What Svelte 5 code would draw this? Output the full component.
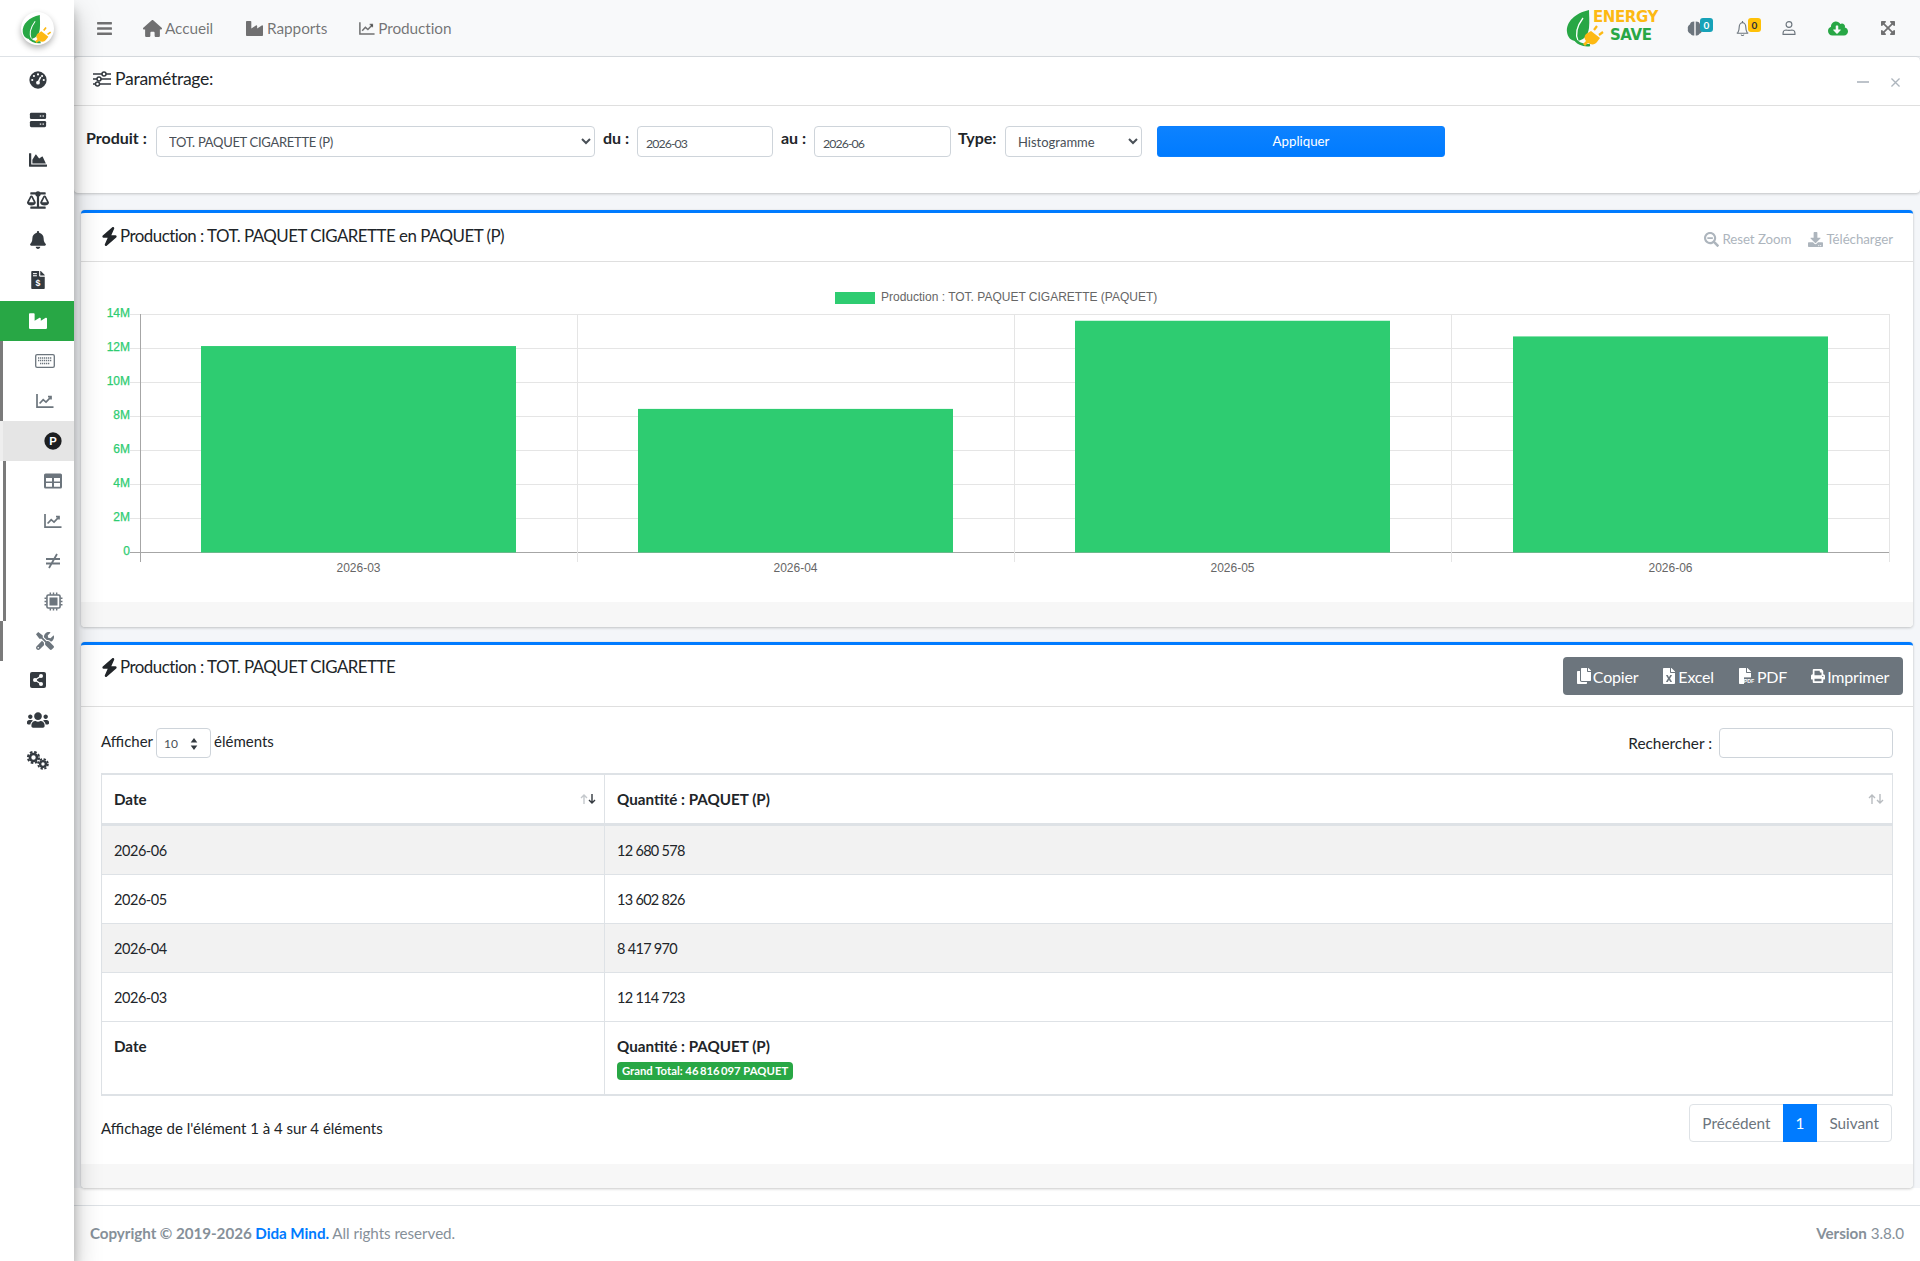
<script>
  const P = {
    bars: [448, 'M16 132h416c8.837 0 16-7.163 16-16V76c0-8.837-7.163-16-16-16H16C7.163 60 0 67.163 0 76v40c0 8.837 7.163 16 16 16zm0 160h416c8.837 0 16-7.163 16-16v-40c0-8.837-7.163-16-16-16H16c-8.837 0-16 7.163-16 16v40c0 8.837 7.163 16 16 16zm0 160h416c8.837 0 16-7.163 16-16v-40c0-8.837-7.163-16-16-16H16c-8.837 0-16 7.163-16 16v40c0 8.837 7.163 16 16 16z'],
    home: [576, 'M575.8 255.5c0 18-15 32.1-32 32.1h-32l.7 160.2c0 2.7-.2 5.4-.5 8.1V472c0 22.1-17.9 40-40 40H456c-1.1 0-2.2 0-3.3-.1c-1.4 .1-2.8 .1-4.2 .1H416 392c-22.1 0-40-17.9-40-40V448 384c0-17.7-14.3-32-32-32H256c-17.7 0-32 14.3-32 32v64 24c0 22.1-17.9 40-40 40H160 128.1c-1.5 0-3-.1-4.5-.2c-1.2 .1-2.4 .2-3.6 .2H104c-22.1 0-40-17.9-40-40V360c0-.9 0-1.9 .1-2.8V287.6H32c-18 0-32-14-32-32.1c0-9 3-17 10-24L266.4 8c7-7 15-8 22-8s15 2 21 7L564.8 231.5c8 7 12 15 11 24z'],
    industry: [512, 'M475.115 163.781L336 252.309v-68.28c0-18.916-20.931-30.399-36.885-20.248L160 252.309V56c0-13.255-10.745-24-24-24H24C10.745 32 0 42.745 0 56v400c0 13.255 10.745 24 24 24h464c13.255 0 24-10.745 24-24V184.029c0-18.917-20.931-30.399-36.885-20.248z'],
    bolt: [448, 'M349.4 44.6c5.9-13.7 1.5-29.7-10.6-38.5s-28.6-8-39.9 1.8l-256 224c-10 8.8-13.6 22.9-8.9 35.3S50.7 288 64 288H175.5L98.6 467.4c-5.9 13.7-1.5 29.7 10.6 38.5s28.6 8 39.9-1.8l256-224c10-8.8 13.5-22.9 8.9-35.3s-16.6-20.7-30-20.7H272.5L349.4 44.6z'],
    area: [512, 'M500 384c6.6 0 12 5.4 12 12v40c0 6.6-5.4 12-12 12H12c-6.6 0-12-5.4-12-12V76c0-6.6 5.4-12 12-12h40c6.6 0 12 5.4 12 12v308h436zM372.7 159.5L288 216l-85.3-113.7c-5.1-6.8-15.5-6.3-19.9 1L96 248v104h384l-89.9-187.8c-3.2-6.5-11.4-8.7-17.4-4.7z'],
    scale: [640, 'M256 336h-.02c0-16.18 1.34-8.73-85.05-181.51-17.65-35.29-68.19-35.36-85.87 0C-2.06 328.75.02 320.33.02 336H0c0 44.18 57.31 80 128 80s128-35.82 128-80zM128 176l72 144H56l72-144zm511.98 160c0-16.18 1.34-8.73-85.05-181.51-17.65-35.29-68.19-35.36-85.87 0-87.12 174.26-85.04 165.84-85.04 181.51H384c0 44.18 57.31 80 128 80s128-35.82 128-80h-.02zM440 320l72-144 72 144H440zm88 128H352V153.25c23.51-10.29 41.16-31.48 46.39-57.25H528c8.84 0 16-7.16 16-16V48c0-8.84-7.16-16-16-16H383.64C369.04 12.68 346.09 0 320 0s-49.04 12.68-63.64 32H112c-8.84 0-16 7.16-16 16v32c0 8.84 7.16 16 16 16h129.61c5.23 25.76 22.87 46.96 46.39 57.25V448H112c-8.84 0-16 7.16-16 16v32c0 8.84 7.16 16 16 16h416c8.84 0 16-7.16 16-16v-32c0-8.84-7.16-16-16-16z'],
    bell: [448, 'M224 512c35.32 0 63.97-28.65 63.97-64H160.03c0 35.35 28.65 64 63.97 64zm215.39-149.71c-19.32-20.76-55.47-51.99-55.47-154.29 0-77.7-54.48-139.9-127.94-155.16V32c0-17.67-14.32-32-31.98-32s-31.98 14.33-31.98 32v20.84C118.56 68.1 64.08 130.3 64.08 208c0 102.3-36.15 133.53-55.47 154.29-6 6.45-8.66 14.16-8.61 21.71.11 16.4 12.98 32 32.1 32h383.8c19.12 0 32-15.6 32.1-32 .05-7.55-2.61-15.27-8.61-21.71z'],
    tools: [512, 'M501.1 395.7L384 278.6c-23.1-23.1-57.6-27.6-85.4-13.9L192 158.1V96L64 0 0 64l96 128h62.1l106.6 106.6c-13.6 27.8-9.2 62.3 13.9 85.4l117.1 117.1c14.6 14.6 38.2 14.6 52.7 0l52.7-52.7c14.5-14.6 14.5-38.2 0-52.7zM331.7 225c28.3 0 54.9 11 74.9 31l19.4 19.4c15.8-6.9 30.8-16.5 43.8-29.5 37.1-37.1 49.7-89.3 37.9-136.7-2.2-9-13.5-12.1-20.1-5.5l-74.4 74.4-67.9-11.3L334 98.9l74.4-74.4c6.6-6.6 3.4-17.9-5.7-20.2-47.4-11.7-99.6.9-136.6 37.9-28.5 28.5-41.9 66.1-41.2 103.6l82.1 82.1c8.1-1.9 16.5-2.9 24.7-2.9zm-103.9 82l-56.7-56.7L18.7 402.8c-25 25-25 65.5 0 90.5s65.5 25 90.5 0l123.6-123.6c-7.6-19.9-9.9-41.6-5-62.7zM64 472c-13.2 0-24-10.8-24-24 0-13.3 10.7-24 24-24s24 10.7 24 24c0 13.2-10.7 24-24 24z'],
    users: [640, 'M96 224c35.3 0 64-28.7 64-64s-28.7-64-64-64-64 28.7-64 64 28.7 64 64 64zm448 0c35.3 0 64-28.7 64-64s-28.7-64-64-64-64 28.7-64 64 28.7 64 64 64zm32 32h-64c-17.6 0-33.5 7.1-45.1 18.6 40.3 22.1 68.9 62 75.1 109.4h66c17.7 0 32-14.3 32-32v-32c0-35.3-28.7-64-64-64zm-256 0c61.9 0 112-50.1 112-112S381.9 32 320 32 208 82.1 208 144s50.1 112 112 112zm76.8 32h-8.3c-20.8 10-43.9 16-68.5 16s-47.6-6-68.5-16h-8.3C179.6 288 128 339.6 128 403.2V432c0 26.5 21.5 48 48 48h288c26.5 0 48-21.5 48-48v-28.8c0-63.6-51.6-115.2-115.2-115.2zm-223.7-13.4C161.5 263.1 145.6 256 128 256H64c-35.3 0-64 28.7-64 64v32c0 17.7 14.3 32 32 32h65.9c6.3-47.4 34.9-87.3 75.2-109.4z'],
    copy: [448, 'M320 448v40c0 13.255-10.745 24-24 24H24c-13.255 0-24-10.745-24-24V120c0-13.255 10.745-24 24-24h72v296c0 30.879 25.121 56 56 56h168zm0-344V0H152c-13.255 0-24 10.745-24 24v368c0 13.255 10.745 24 24 24h272c13.255 0 24-10.745 24-24V128H344c-13.2 0-24-10.8-24-24zm120.971-31.029L375.029 7.029A24 24 0 0 0 358.059 0H352v96h96v-6.059a24 24 0 0 0-7.029-16.97z'],
    excel: [384, 'M224 136V0H24C10.7 0 0 10.7 0 24v464c0 13.3 10.7 24 24 24h336c13.3 0 24-10.7 24-24V160H248c-13.2 0-24-10.8-24-24zm60.1 106.5L224 336l60.1 93.5c5.1 8-.6 18.5-10.1 18.5h-34.9c-4.4 0-8.5-2.4-10.6-6.3C208.9 405.5 192 373 192 373c-6.4 14.8-10 20-36.6 68.8-2.1 3.9-6.1 6.3-10.5 6.3H110c-9.5 0-15.2-10.5-10.1-18.5l60.3-93.5-60.3-93.5c-5.2-8 .6-18.5 10.1-18.5h34.8c4.4 0 8.5 2.4 10.6 6.3 26.1 48.8 20 33.6 36.6 68.5 0 0 6.1-11.7 36.6-68.5 2.1-3.9 6.2-6.3 10.6-6.3H274c9.5-.1 15.2 10.4 10.1 18.4zM384 121.9v6.1H256V0h6.1c6.4 0 12.5 2.5 17 7l97.9 98c4.5 4.5 7 10.6 7 16.9z'],
    file: [384, 'M377 105L279.1 7c-4.5-4.5-10.6-7-17-7H256v128h128v-6.1c0-6.3-2.5-12.4-7-16.9zm-153 31V0H24C10.7 0 0 10.7 0 24v464c0 13.3 10.7 24 24 24h336c13.3 0 24-10.7 24-24V160H248c-13.2 0-24-10.8-24-24z'],
    print: [512, 'M448 192V77.25c0-8.49-3.37-16.62-9.37-22.63L393.37 9.37c-6-6-14.14-9.37-22.63-9.37H96C78.33 0 64 14.33 64 32v160c-35.35 0-64 28.65-64 64v112c0 8.84 7.16 16 16 16h48v96c0 17.67 14.33 32 32 32h320c17.67 0 32-14.33 32-32v-96h48c8.84 0 16-7.16 16-16V256c0-35.35-28.65-64-64-64zm-64 256H128v-96h256v96zm0-224H128V64h192v48c0 8.84 7.16 16 16 16h48v96zm48 72c-13.25 0-24-10.75-24-24 0-13.26 10.75-24 24-24s24 10.74 24 24c0 13.25-10.75 24-24 24z'],
    zoomout: [512, 'M304 192v32c0 6.6-5.4 12-12 12H124c-6.6 0-12-5.4-12-12v-32c0-6.6 5.4-12 12-12h168c6.6 0 12 5.4 12 12zm201 284.7L476.7 505c-9.4 9.4-24.6 9.4-33.9 0L343 405.3c-4.5-4.5-7-10.6-7-17V372c-35.3 27.6-79.7 44-128 44C93.1 416 0 322.9 0 208S93.1 0 208 0s208 93.1 208 208c0 48.3-16.4 92.7-44 128h16.3c6.4 0 12.5 2.5 17 7l99.7 99.7c9.3 9.4 9.3 24.6 0 34zM344 208c0-75.2-60.8-136-136-136S72 132.8 72 208s60.8 136 136 136 136-60.8 136-136z'],
    download: [512, 'M216 0h80c13.3 0 24 10.7 24 24v168h87.7c17.8 0 26.7 21.5 14.1 34.1L269.7 378.3c-7.5 7.5-19.8 7.5-27.3 0L90.1 226.1c-12.6-12.6-3.7-34.1 14.1-34.1H192V24c0-13.3 10.7-24 24-24zm296 376v112c0 13.3-10.7 24-24 24H24c-13.3 0-24-10.7-24-24V376c0-13.3 10.7-24 24-24h146.7l49 49c20.1 20.1 52.5 20.1 72.6 0l49-49H488c13.3 0 24 10.7 24 24zm-124 88c0-11-9-20-20-20s-20 9-20 20 9 20 20 20 20-9 20-20zm64 0c0-11-9-20-20-20s-20 9-20 20 9 20 20 20 20-9 20-20z'],
    cloud: [640, 'M537.6 226.6c4.1-10.7 6.4-22.4 6.4-34.6 0-53-43-96-96-96-19.7 0-38.1 6-53.3 16.2C367 64.2 315.3 32 256 32c-88.4 0-160 71.6-160 160 0 2.7.1 5.4.2 8.1C40.2 219.8 0 273.2 0 336c0 79.5 64.5 144 144 144h368c70.7 0 128-57.3 128-128 0-61.9-44-113.6-102.4-125.4zm-132.9 88.7L299.3 420.7c-6.2 6.2-16.4 6.2-22.6 0L171.3 315.3c-10.1-10.1-2.9-27.3 11.3-27.3H248V176c0-8.8 7.2-16 16-16h48c8.8 0 16 7.2 16 16v112h65.4c14.2 0 21.4 17.2 11.3 27.3z'],
    expand: [448, 'M448 344v112a23.94 23.94 0 0 1-24 24H312c-21.39 0-32.09-25.9-17-41l36.2-36.2L224 295.6 116.77 402.9 153 439c15.09 15.1 4.39 41-17 41H24a23.94 23.94 0 0 1-24-24V344c0-21.4 25.89-32.1 41-17l36.19 36.2L184.46 256 77.18 148.7 41 185c-15.1 15.1-41 4.4-41-17V56a23.94 23.94 0 0 1 24-24h112c21.39 0 32.09 25.9 17 41l-36.2 36.2L224 216.4l107.23-107.3L295 73c-15.09-15.1-4.39-41 17-41h112a23.94 23.94 0 0 1 24 24v112c0 21.4-25.89 32.1-41 17l-36.19-36.2L263.54 256l107.28 107.3L407 327.1c15.1-15.2 41-4.5 41 16.9z']
  };

  const yTicks = [['14M',314],['12M',348],['10M',382],['8M',416],['6M',450],['4M',484],['2M',518],['0',552]];
  const xGrid = [140.5, 577.5, 1014.5, 1451.5, 1889.5];
  const bars = [
    { label: '2026-03', x: 201, value: 12114723 },
    { label: '2026-04', x: 638, value: 8417970 },
    { label: '2026-05', x: 1075, value: 13602826 },
    { label: '2026-06', x: 1513, value: 12680578 }
  ];
  const barY = (v) => 552 - (v / 14000000) * 238;
  const rows = [
    ['2026-06', '12\u00a0680\u00a0578'],
    ['2026-05', '13\u00a0602\u00a0826'],
    ['2026-04', '8\u00a0417\u00a0970'],
    ['2026-03', '12\u00a0114\u00a0723']
  ];
</script>

{#snippet ic(name, cls)}
  <svg class="ic {cls}" viewBox="0 0 {P[name][0]} 512" fill="currentColor" aria-hidden="true"><path d={P[name][1]} /></svg>
{/snippet}

{#snippet lineChart(cls)}
  <svg class="ic {cls}" viewBox="0 0 18 16" fill="none" stroke="currentColor" stroke-width="1.7" aria-hidden="true">
    <path d="M1 1v13.2h16.5" /><path d="M3.6 10.5l3.600-3.800 2.800 2.400 4.800-5" /><path d="M12 3.600h3v3" />
  </svg>
{/snippet}

{#snippet leaf(cls)}
  <svg class="{cls}" viewBox="0 0 40 38" aria-hidden="true">
    <path d="M23 1C9 4 0 13 1 23c.5 5 4 9 9 9 7 0 12-5 13-13 .7-7 0-13 0-18z" fill="#28a745" />
    <path d="M17 9C11 17 9 25 12 32" stroke="#fff" stroke-width="1.300" fill="none" />
    <path d="M8 28c2 6 9 9 16 8" stroke="#28a745" stroke-width="2.600" fill="none" />
    <path d="M25 22l9 7-3 4c-2 3-6 3-9 1l-3 3-2-2 3-3c-2-2-2-5 0-7z" fill="#fdb913" />
    <path d="M28 21l3-4M33 26l4-3" stroke="#fdb913" stroke-width="2.200" fill="none" />
  </svg>
{/snippet}

<div class="app">
  <aside class="sidebar">
    <div class="brand">
      <div class="brand-circle">{@render leaf('brand-leaf')}</div>
    </div>
    <nav class="side-nav">
      <div class="si">
        <svg class="ic sz" viewBox="0 0 20 20" aria-hidden="true">
          <circle cx="10" cy="10" r="9.600" fill="#343a40" />
          <g fill="#fff"><circle cx="10" cy="3.800" r="1.200" /><circle cx="5.500" cy="5.600" r="1.200" /><circle cx="14.500" cy="5.600" r="1.200" /><circle cx="3.600" cy="10" r="1.200" /><circle cx="16.400" cy="10" r="1.200" /></g>
          <path d="M13 6.500L10.600 11.500" stroke="#fff" stroke-width="1.600" /><circle cx="10" cy="13" r="2.100" fill="#fff" />
        </svg>
      </div>
      <div class="si">
        <svg class="ic sz" viewBox="0 0 20 18" aria-hidden="true">
          <rect x="1" y="1" width="18" height="7" rx="1.600" fill="#343a40" /><rect x="1" y="10" width="18" height="7" rx="1.600" fill="#343a40" />
          <g fill="#fff"><rect x="12" y="3.900" width="1.600" height="1.300" /><rect x="15" y="3.900" width="1.600" height="1.300" /><rect x="12" y="12.900" width="1.600" height="1.300" /><rect x="15" y="12.900" width="1.600" height="1.300" /></g>
        </svg>
      </div>
      <div class="si">{@render ic('area', 'sz')}</div>
      <div class="si">{@render ic('scale', 'sz-w')}</div>
      <div class="si">{@render ic('bell', 'sz')}</div>
      <div class="si">
        <svg class="ic sz" viewBox="0 0 384 512" aria-hidden="true">
          <path d={P.file[1]} fill="#343a40" />
          <rect x="50" y="60" width="110" height="30" fill="#fff" /><rect x="50" y="120" width="110" height="30" fill="#fff" />
          <text x="192" y="430" text-anchor="middle" font-size="250" font-weight="700" fill="#fff" font-family="Liberation Sans, sans-serif">$</text>
        </svg>
      </div>
      <div class="si active">{@render ic('industry', 'sz')}</div>
      <div class="l2">
        <div class="si2">
          <svg class="ic sz-k" viewBox="0 0 20 14" fill="none" stroke="#6c757d" aria-hidden="true">
            <rect x=".7" y=".7" width="18.600" height="12.600" rx="1.400" stroke-width="1.300" />
            <path d="M3 4h14M3 6.600h14M5 9.600h10" stroke-width="1.500" stroke-dasharray="1.300 .7" />
          </svg>
        </div>
        <div class="si2">{@render lineChart('sz-g')}</div>
      </div>
      <div class="si3 cur">
        <svg class="ic sz" viewBox="0 0 20 20" aria-hidden="true">
          <circle cx="10" cy="10" r="9.600" fill="#1d1f21" />
          <text x="10" y="14.300" text-anchor="middle" font-size="12.500" font-weight="700" fill="#fff" font-family="Liberation Sans, sans-serif">P</text>
        </svg>
      </div>
      <div class="si3">
        <svg class="ic sz-g" viewBox="0 0 18 15" aria-hidden="true">
          <rect width="18" height="15" rx="1.600" fill="#6c757d" />
          <path d="M2 4.500h6v3.600H2zM10 4.500h6v3.600h-6zM2 9.600h6v3.600H2zM10 9.600h6v3.600h-6z" fill="#fff" />
        </svg>
      </div>
      <div class="si3">{@render lineChart('sz-g')}</div>
      <div class="si3">
        <svg class="ic sz-g" viewBox="0 0 16 16" fill="none" stroke="#6c757d" stroke-width="1.800" aria-hidden="true">
          <path d="M1 6h14M1 10.500h14M12 1L4 15" />
        </svg>
      </div>
      <div class="si3">
        <svg class="ic sz-chip" viewBox="0 0 18 18" fill="none" stroke="#6c757d" aria-hidden="true">
          <rect x="2.800" y="2.800" width="12.400" height="12.400" rx="1.200" stroke-width="1.500" />
          <rect x="5.200" y="5.200" width="7.600" height="7.600" fill="#6c757d" stroke="none" />
          <path d="M6 .5v2M9 .5v2M12 .5v2M6 15.500v2M9 15.500v2M12 15.500v2M.5 6h2M.5 9h2M.5 12h2M15.500 6h2M15.500 9h2M15.500 12h2" stroke-width="1.400" />
        </svg>
      </div>
      <div class="l2">
        <div class="si2 tool">{@render ic('tools', 'sz')}</div>
      </div>
      <div class="si">
        <svg class="ic sz-s" viewBox="0 0 16 16" aria-hidden="true">
          <rect width="16" height="16" rx="2" fill="#343a40" />
          <g fill="#fff"><circle cx="11" cy="4" r="2" /><circle cx="11" cy="12" r="2" /><circle cx="5" cy="8" r="2" /></g>
          <path d="M11 4L5 8l6 4" stroke="#fff" stroke-width="1.200" fill="none" />
        </svg>
      </div>
      <div class="si">{@render ic('users', 'sz-w')}</div>
      <div class="si">
        <svg class="ic sz-c" viewBox="0 0 24 20" fill="none" stroke="#343a40" aria-hidden="true">
          <circle cx="7.500" cy="7.500" r="3.500" stroke-width="2.600" /><circle cx="7.500" cy="7.500" r="5.600" stroke-width="2" stroke-dasharray="2.600 1.800" />
          <circle cx="17" cy="14" r="2.900" stroke-width="2.400" /><circle cx="17" cy="14" r="4.900" stroke-width="1.800" stroke-dasharray="2.300 1.550" />
        </svg>
      </div>
    </nav>
  </aside>

  <div class="main">
    <header class="navbar">
      <span class="hamb">{@render ic('bars', 'n-bars')}</span>
      <a class="nl first">{@render ic('home', 'n-home')}Accueil</a>
      <a class="nl">{@render ic('industry', 'n-ind')}Rapports</a>
      <a class="nl third">{@render lineChart('n-line')}Production</a>
      <div class="nav-right">
        <div class="logo">
          {@render leaf('logo-leaf')}
          <div class="logo-text"><span class="l-e">ENERGY</span><span class="l-s">SAVE</span></div>
        </div>
        <span class="ri brain">
          <svg class="ic r-b" viewBox="0 0 18 18" fill="#6c757d" aria-hidden="true">
            <path d="M8.200 1C5 1 3.500 2.500 3.500 4.200 1.200 5.200.5 8 1 9.500.3 11.500 1.700 14.300 4 14.800 5 16.500 6.500 17 8.200 17z" /><path d="M9.800 1c3.200 0 4.700 1.500 4.700 3.200 2.300 1 3 3.800 2.500 5.300.7 2-.7 4.800-3 5.300-1 1.700-2.500 2.200-4.200 2.200z" />
          </svg>
          <b class="badge info">0</b>
        </span>
        <span class="ri bell">
          <svg class="ic r-bl" viewBox="0 0 16 18" fill="none" stroke="#6c757d" stroke-width="1.200" aria-hidden="true">
            <path d="M8 1v1.500M3 13.500c1-1.500 1.500-2.500 1.500-6C4.500 5 6 2.700 8 2.700s3.500 2.300 3.500 4.800c0 3.500.5 4.500 1.500 6l1 .5H2z" /><path d="M6.500 15.500c.5 1.300 2.500 1.300 3 0" />
          </svg>
          <b class="badge warn">0</b>
        </span>
        <span class="ri user">
          <svg class="ic r-u" viewBox="0 0 16 17" fill="none" stroke="#6c757d" stroke-width="1.300" aria-hidden="true">
            <circle cx="8" cy="4.500" r="3.300" /><path d="M1.200 15.800v-1.600c0-2.200 2-3.400 3.500-3.400 1.200.6 5.400.6 6.600 0 1.500 0 3.500 1.200 3.500 3.400v1.600z" />
          </svg>
        </span>
        <span class="ri cloud">{@render ic('cloud', 'r-c')}</span>
        <span class="ri exp">{@render ic('expand', 'r-e')}</span>
      </div>
    </header>

    <div class="content">
      <section class="card c1">
        <div class="c-head h1">
          <h3 class="title t-sm">
            <svg class="ic t-sl" viewBox="0 0 18 16" fill="none" stroke="#343a40" stroke-width="1.500" aria-hidden="true">
              <path d="M0 3h18M0 8h18M0 13h18" />
              <circle cx="11" cy="3" r="2" fill="#fff" /><circle cx="6" cy="8" r="2" fill="#fff" /><circle cx="4.500" cy="13" r="2" fill="#fff" />
            </svg>
            Paramétrage:
          </h3>
          <div class="tools1">
            <svg class="ic t-min" viewBox="0 0 12 12" stroke="#adb5bd" stroke-width="1.600" aria-hidden="true"><path d="M0 6h12" /></svg>
            <svg class="ic t-x" viewBox="0 0 10 10" stroke="#adb5bd" stroke-width="1.500" aria-hidden="true"><path d="M.5.5l9 9M9.500.5l-9 9" /></svg>
          </div>
        </div>
        <form class="filters">
          <label class="f-l f-prod">Produit :</label>
          <select class="ctl s-prod"><option>TOT. PAQUET CIGARETTE (P)</option></select>
          <label class="f-l f-du">du :</label>
          <input class="ctl i-date" value="2026-03" />
          <label class="f-l f-au">au :</label>
          <input class="ctl i-date i2" value="2026-06" />
          <label class="f-l f-type">Type:</label>
          <select class="ctl s-type"><option>Histogramme</option></select>
          <button type="button" class="apply">Appliquer</button>
        </form>
      </section>

      <section class="card outline c2">
        <div class="c-head h2">
          <h3 class="title">{@render ic('bolt', 't-bolt')}Production : TOT. PAQUET CIGARETTE en PAQUET (P)</h3>
          <div class="chart-tools">
            <span class="ct">{@render ic('zoomout', 'ct-i')}Reset Zoom</span>
            <span class="ct">{@render ic('download', 'ct-i')}Télécharger</span>
          </div>
        </div>
        <div class="chart-wrap">
          <svg class="chart" viewBox="81 262 1832 340" role="img" aria-label="Production">
            <rect x="835" y="292" width="40" height="12" fill="#2ecc71" />
            <text x="881" y="301" class="lg">Production : TOT. PAQUET CIGARETTE (PAQUET)</text>
            {#each yTicks as [t, y]}
              <line x1="130" x2="1889.500" y1={y + 0.5} y2={y + 0.5} class={t === '0' ? 'ax' : 'gr'} />
              <text x="130" y={y + 3} class="yt">{t}</text>
            {/each}
            {#each xGrid as x, i}
              <line x1={x} x2={x} y1="314" y2="562" class={i === 0 ? 'ax' : 'gr'} />
            {/each}
            {#each bars as b}
              <rect x={b.x} y={barY(b.value)} width="315" height={552.500 - barY(b.value)} fill="#2ecc71" />
              <text x={b.x + 157.500} y="572" class="xt">{b.label}</text>
            {/each}
          </svg>
        </div>
        <div class="c-foot"></div>
      </section>

      <section class="card outline c3">
        <div class="c-head h3">
          <h3 class="title">{@render ic('bolt', 't-bolt')}Production : TOT. PAQUET CIGARETTE</h3>
          <div class="btns">
            <span class="b">{@render ic('copy', 'b-i')}Copier</span>
            <span class="b">{@render ic('excel', 'b-i')}Excel</span>
            <span class="b pdf">
              <svg class="ic b-i" viewBox="0 0 480 512" aria-hidden="true">
                <path d={P.file[1]} fill="#fff" />
                <rect x="160" y="300" width="320" height="212" fill="#6c757d" />
                <text x="320" y="480" text-anchor="middle" font-size="170" font-weight="700" fill="#fff" font-family="Liberation Sans, sans-serif">PDF</text>
              </svg>PDF
            </span>
            <span class="b">{@render ic('print', 'b-i')}Imprimer</span>
          </div>
        </div>
        <div class="c-body">
          <div class="dt-top">
            <div class="len">
              Afficher
              <span class="len-sel">
                <select class="ctl s-len"><option>10</option></select>
                <svg class="len-ar" viewBox="0 0 8 13" fill="#343a40" aria-hidden="true"><path d="M4 0l3.600 4.800H.4zM4 13L.4 8.200h7.200z" /></svg>
              </span>
              éléments
            </div>
            <div class="search">Rechercher : <input class="ctl i-search" /></div>
          </div>
          <table class="tbl">
            <thead>
              <tr>
                <th class="col1">Date
                  <svg class="sort" viewBox="0 0 16 12" fill="none" aria-hidden="true"><path d="M4 11V2M1 5l3-3 3 3" stroke="#c4c8cc" stroke-width="1.400" /><path d="M12 1v9M9 7l3 3 3-3" stroke="#343a40" stroke-width="1.400" /></svg>
                </th>
                <th>Quantité : PAQUET (P)
                  <svg class="sort" viewBox="0 0 16 12" fill="none" stroke="#b8bcc0" stroke-width="1.400" aria-hidden="true"><path d="M4 11V2M1 5l3-3 3 3" /><path d="M12 1v9M9 7l3 3 3-3" /></svg>
                </th>
              </tr>
            </thead>
            <tbody>
              {#each rows as r}
                <tr><td>{r[0]}</td><td class="num">{r[1]}</td></tr>
              {/each}
            </tbody>
            <tfoot>
              <tr>
                <th>Date</th>
                <th>Quantité : PAQUET (P)<br /><span class="gt">Grand Total: 46&#8201;816&#8201;097 PAQUET</span></th>
              </tr>
            </tfoot>
          </table>
          <div class="dt-bot">
            <div class="info-t">Affichage de l'élément 1 à 4 sur 4 éléments</div>
            <div class="pager"><span class="pg">Précédent</span><span class="pg on">1</span><span class="pg">Suivant</span></div>
          </div>
        </div>
        <div class="c-foot f3"></div>
      </section>
    </div>

    <footer class="foot">
      <div><strong>Copyright © 2019-2026 <a class="dm">Dida Mind.</a></strong> All rights reserved.</div>
      <div><strong>Version</strong> 3.8.0</div>
    </footer>
  </div>
</div>

<style>
  :global(body) { margin: 0; background: #fff; }
  .app {
    display: flex; width: 1920px; height: 1261px; overflow: hidden;
    font-family: Lato, "Liberation Sans", sans-serif; font-size: 15px; color: #212529;
  }
  .ic { display: block; flex: none; }

  .sidebar {
    width: 74px; flex: none; background: #fff; position: relative; z-index: 5;
    box-shadow: 0 14px 28px rgba(0,0,0,.25), 0 10px 10px rgba(0,0,0,.22);
  }
  .brand { height: 56px; border-bottom: 1px solid #dee2e6; display: flex; align-items: center; justify-content: center; }
  .brand-circle {
    width: 33px; height: 33px; border-radius: 50%; background: #fff; display: flex; align-items: center; justify-content: center;
    box-shadow: 0 3px 6px rgba(0,0,0,.3); margin-top: 1px;
  }
  .brand-leaf { width: 31px; height: 30px; }
  .side-nav { display: flex; flex-direction: column; padding-top: 4px; color: #343a40; }
  .si { height: 40px; box-sizing: border-box; padding: 0 0 2px 1px; display: flex; align-items: center; justify-content: center; }
  .si.active { background: #28a745; color: #fff; padding-bottom: 0; }
  .l2 { display: flex; flex-direction: column; }
  .si2 { height: 40px; display: flex; align-items: center; justify-content: center; padding: 0 0 0 13px; border-left: 3px solid #7a7a7a; box-sizing: border-box; color: #6c757d; }
  .si3 { height: 40px; margin-left: 3px; padding-left: 26px; border-left: 3px solid #7a7a7a; box-sizing: border-box; display: flex; align-items: center; justify-content: center; color: #6c757d; }
  .si3.cur { background: #e5e5e5; border-left-color: #eee; margin-left: 0; padding-left: 29px; }
  .sz { width: 18px; height: 18px; }
  .sz-w { width: 22px; height: 18px; }
  .sz-k { width: 20px; height: 14px; }
  .sz-g { width: 18px; height: 16px; }
  .sz-chip { width: 19px; height: 19px; }
  .sz-s { width: 16px; height: 16px; }
  .sz-c { width: 24px; height: 20px; }

  .main { flex: 1; min-width: 0; display: flex; flex-direction: column; }
  .navbar {
    height: 56px; flex: none; background: #f8f9fa; border-bottom: 1px solid #dee2e6; display: flex; align-items: center;
    color: rgba(0,0,0,.55); font-size: 15.400px;
  }
  .hamb { margin-left: 23px; }
  .n-bars { width: 15px; height: 17px; }
  .nl { display: flex; align-items: center; gap: 4px; margin-left: 33px; letter-spacing: -.1px; }
  .nl.first { margin-left: 31px; gap: 3px; }
  .nl.third { margin-left: 32px; gap: 3px; }
  .n-home { width: 19px; height: 17px; }
  .n-ind { width: 17px; height: 17px; }
  .n-line { width: 16px; height: 15px; }
  .nav-right { margin-left: auto; display: flex; align-items: center; padding-right: 25px; }
  .logo { display: flex; align-items: flex-start; margin-right: 29px; height: 38px; }
  .logo-leaf { width: 40px; height: 38px; }
  .logo-text { display: flex; flex-direction: column; font-family: "DejaVu Sans", sans-serif; font-weight: 700; line-height: 18px; margin: -1px 0 0 -13px; }
  .l-e { color: #fdb913; font-size: 15px; height: 18px; letter-spacing: -.4px; }
  .l-s { color: #28a745; font-size: 15px; height: 18px; margin-left: 17px; letter-spacing: -.4px; }
  .ri { position: relative; display: block; }
  .brain { margin-right: 32px; }
  .bell { margin-right: 32px; }
  .user { margin-right: 32px; }
  .cloud { margin-right: 33px; color: #28a745; }
  .r-b { width: 16px; height: 17px; }
  .r-bl { width: 15px; height: 17px; }
  .r-u { width: 14px; height: 16px; }
  .r-c { width: 20px; height: 17px; }
  .r-e { width: 14px; height: 16px; }
  .badge {
    position: absolute; left: 13px; top: -2px; width: 13px; height: 14px; border-radius: 3px; color: #fff;
    font-size: 10px; font-weight: 700; line-height: 14px; text-align: center;
  }
  .badge.info { background: #17a2b8; }
  .badge.warn { background: #ffc107; color: #1f2d3d; }

  .content { background: #f4f6f9; display: flex; flex-direction: column; height: 1131px; flex: none; }
  .card { background: #fff; border-radius: 4px; box-shadow: 0 0 1px rgba(0,0,0,.125), 0 1px 3px rgba(0,0,0,.2); display: flex; flex-direction: column; box-sizing: border-box; }
  .c1 { height: 136px; }
  .c2 { margin: 17px 7px 0; height: 417px; }
  .c3 { margin: 15px 7px 0; height: 546px; }
  .outline { border-top: 3px solid #007bff; }
  .c-head { display: flex; align-items: flex-start; justify-content: space-between; border-bottom: 1px solid rgba(0,0,0,.125); box-sizing: border-box; flex: none; }
  .h1 { height: 49px; padding: 10px 16px 0 19px; }
  .h2 { height: 49px; padding: 11px 20px 0 20px; }
  .h3 { height: 62px; padding: 10px 10px 0 20px; }
  .title { margin: 0; font-size: 16.900px; line-height: 24px; font-weight: 400; display: flex; align-items: center; letter-spacing: -.52px; }
  .t-sm { gap: 4px; font-size: 17.600px; letter-spacing: -.3px; }
  .t-sl { width: 18px; height: 16px; }
  .t-bolt { width: 17px; height: 19px; margin-right: 2px; color: #212529; }
  .tools1 { display: flex; align-items: center; gap: 22px; padding-top: 9px; }
  .t-min { width: 12px; height: 12px; }
  .t-x { width: 9px; height: 9px; margin-right: 4px; }

  .filters { display: flex; align-items: flex-start; padding: 20px 0 0 12px; }
  .f-l { font-weight: 700; font-size: 16px; line-height: 24px; margin-top: 0; }
  .f-prod { width: 69px; margin-right: 1px; }
  .f-du { margin-left: 8px; width: 34px; }
  .f-au { margin-left: 8px; width: 33px; }
  .f-type { margin-left: 7px; width: 47px; }
  .ctl {
    box-sizing: border-box; height: 31px; border: 1px solid #ced4da; border-radius: 4px; background: #fff; color: #495057;
    font-family: inherit; font-size: 13px; padding: 0 12px; outline: none; margin: 0;
  }
  .s-prod { width: 439px; padding-left: 8px; letter-spacing: -.3px; }
  .i-date { width: 136px; padding: 3px 8px 0; font-size: 12.300px; letter-spacing: -.9px; }
  .i2 { width: 137px; }
  .s-type { width: 137px; padding-left: 8px; }
  .apply {
    margin-left: 15px; width: 288px; height: 31px; box-sizing: border-box; border: 1px solid #0a7fff; border-radius: 3px; color: #fff;
    background: linear-gradient(180deg, #0d82ff, #007bff); font-family: inherit; font-size: 13.300px; padding: 0 0 2px;
  }

  .chart-tools { display: flex; gap: 17px; color: #adb5bd; font-size: 13.300px; padding-top: 7px; letter-spacing: -.05px; }
  .ct { display: flex; align-items: center; gap: 3px; }
  .ct-i { width: 15px; height: 15px; }
  .chart-wrap { flex: 1; min-height: 0; }
  .chart { display: block; width: 100%; height: 340px; font-family: "Liberation Sans", Arial, sans-serif; font-size: 12px; }
  .lg { fill: #666; }
  .gr { stroke: #e5e5e5; stroke-width: 1; }
  .ax { stroke: #a6a6a6; stroke-width: 1; }
  .yt { fill: #2ecc71; text-anchor: end; stroke: #2ecc71; stroke-width: .25px; }
  .xt { fill: #666; text-anchor: middle; }
  .c-foot { height: 25px; flex: none; background: #f7f7f7; border-radius: 0 0 4px 4px; }
  .f3 { height: 24px; }

  .btns { background: #6c757d; border-radius: 4px; display: flex; width: 340px; height: 38px; align-items: center; justify-content: center; color: #fff; font-size: 16px; box-sizing: border-box; margin-top: 2px; gap: 24px; letter-spacing: -.2px; }
  .b { display: flex; align-items: center; gap: 2px; }
  .b-i { width: 14px; height: 16px; }
  .pdf .b-i { width: 17px; }

  .c-body { flex: 1; min-height: 0; padding: 20px 20px 0; }
  .dt-top { display: flex; justify-content: space-between; align-items: center; height: 31px; }
  .len { display: flex; align-items: center; gap: 3px; margin-top: -4px; }
  .len-sel { position: relative; display: block; margin-top: 4px; }
  .s-len { width: 55px; height: 30px; appearance: none; -webkit-appearance: none; font-size: 12px; padding: 2px 0 0 7px; display: block; }
  .len-ar { position: absolute; left: 34px; top: 10px; width: 8px; height: 12px; }
  .search { display: flex; align-items: center; gap: 7px; font-size: 15.400px; }
  .i-search { width: 174px; height: 30px; }
  .tbl { width: 100%; border-collapse: collapse; margin-top: 15px; table-layout: fixed; }
  .tbl th, .tbl td { border: 1px solid #dee2e6; padding: 12px; line-height: 24px; text-align: left; vertical-align: top; box-sizing: border-box; }
  .tbl th { font-weight: 700; font-size: 15.200px; }
  .tbl thead th { border-top-width: 2px; border-bottom-width: 3px; position: relative; height: 50px; }
  .tbl tfoot th { border-bottom-width: 2px; padding-bottom: 12px; }
  .tbl tbody td { height: 49px; font-size: 14.500px; letter-spacing: -.45px; padding: 13px 12px 11px; }
  .tbl tbody td.num { letter-spacing: -.7px; }
  .tbl tbody tr:nth-child(odd) td { background: #f2f2f2; }
  .col1 { width: 503px; }
  .sort { position: absolute; right: 8px; top: 18px; width: 16px; height: 12px; }
  .gt {
    display: inline-block; background: #28a745; color: #fff; font-size: 11.300px; line-height: 18px; height: 18px; padding: 0 5px;
    border-radius: 4px; vertical-align: top; margin-top: 4px; margin-bottom: -2px;
  }
  .dt-bot { display: flex; justify-content: space-between; align-items: flex-start; margin-top: 8px; height: 38px; padding-right: 1px; }
  .info-t { padding-top: 12px; line-height: 24px; }
  .pager { display: flex; border: 1px solid #dee2e6; border-radius: 4px; height: 38px; box-sizing: border-box; color: #6c757d; font-size: 15.300px; }
  .pg { padding: 0 12px; line-height: 36px; }
  .pg.on { background: #007bff; color: #fff; margin: -1px 0; line-height: 38px; padding: 0 13px; }

  .foot {
    margin-top: 17px; border-top: 1px solid #dee2e6; padding: 0 16px 2px; height: 56px; box-sizing: border-box; display: flex; justify-content: space-between; align-items: center;
    color: #869099; background: #fff; font-size: 15.200px; letter-spacing: -.05px;
  }
  .dm { color: #007bff; }
</style>
